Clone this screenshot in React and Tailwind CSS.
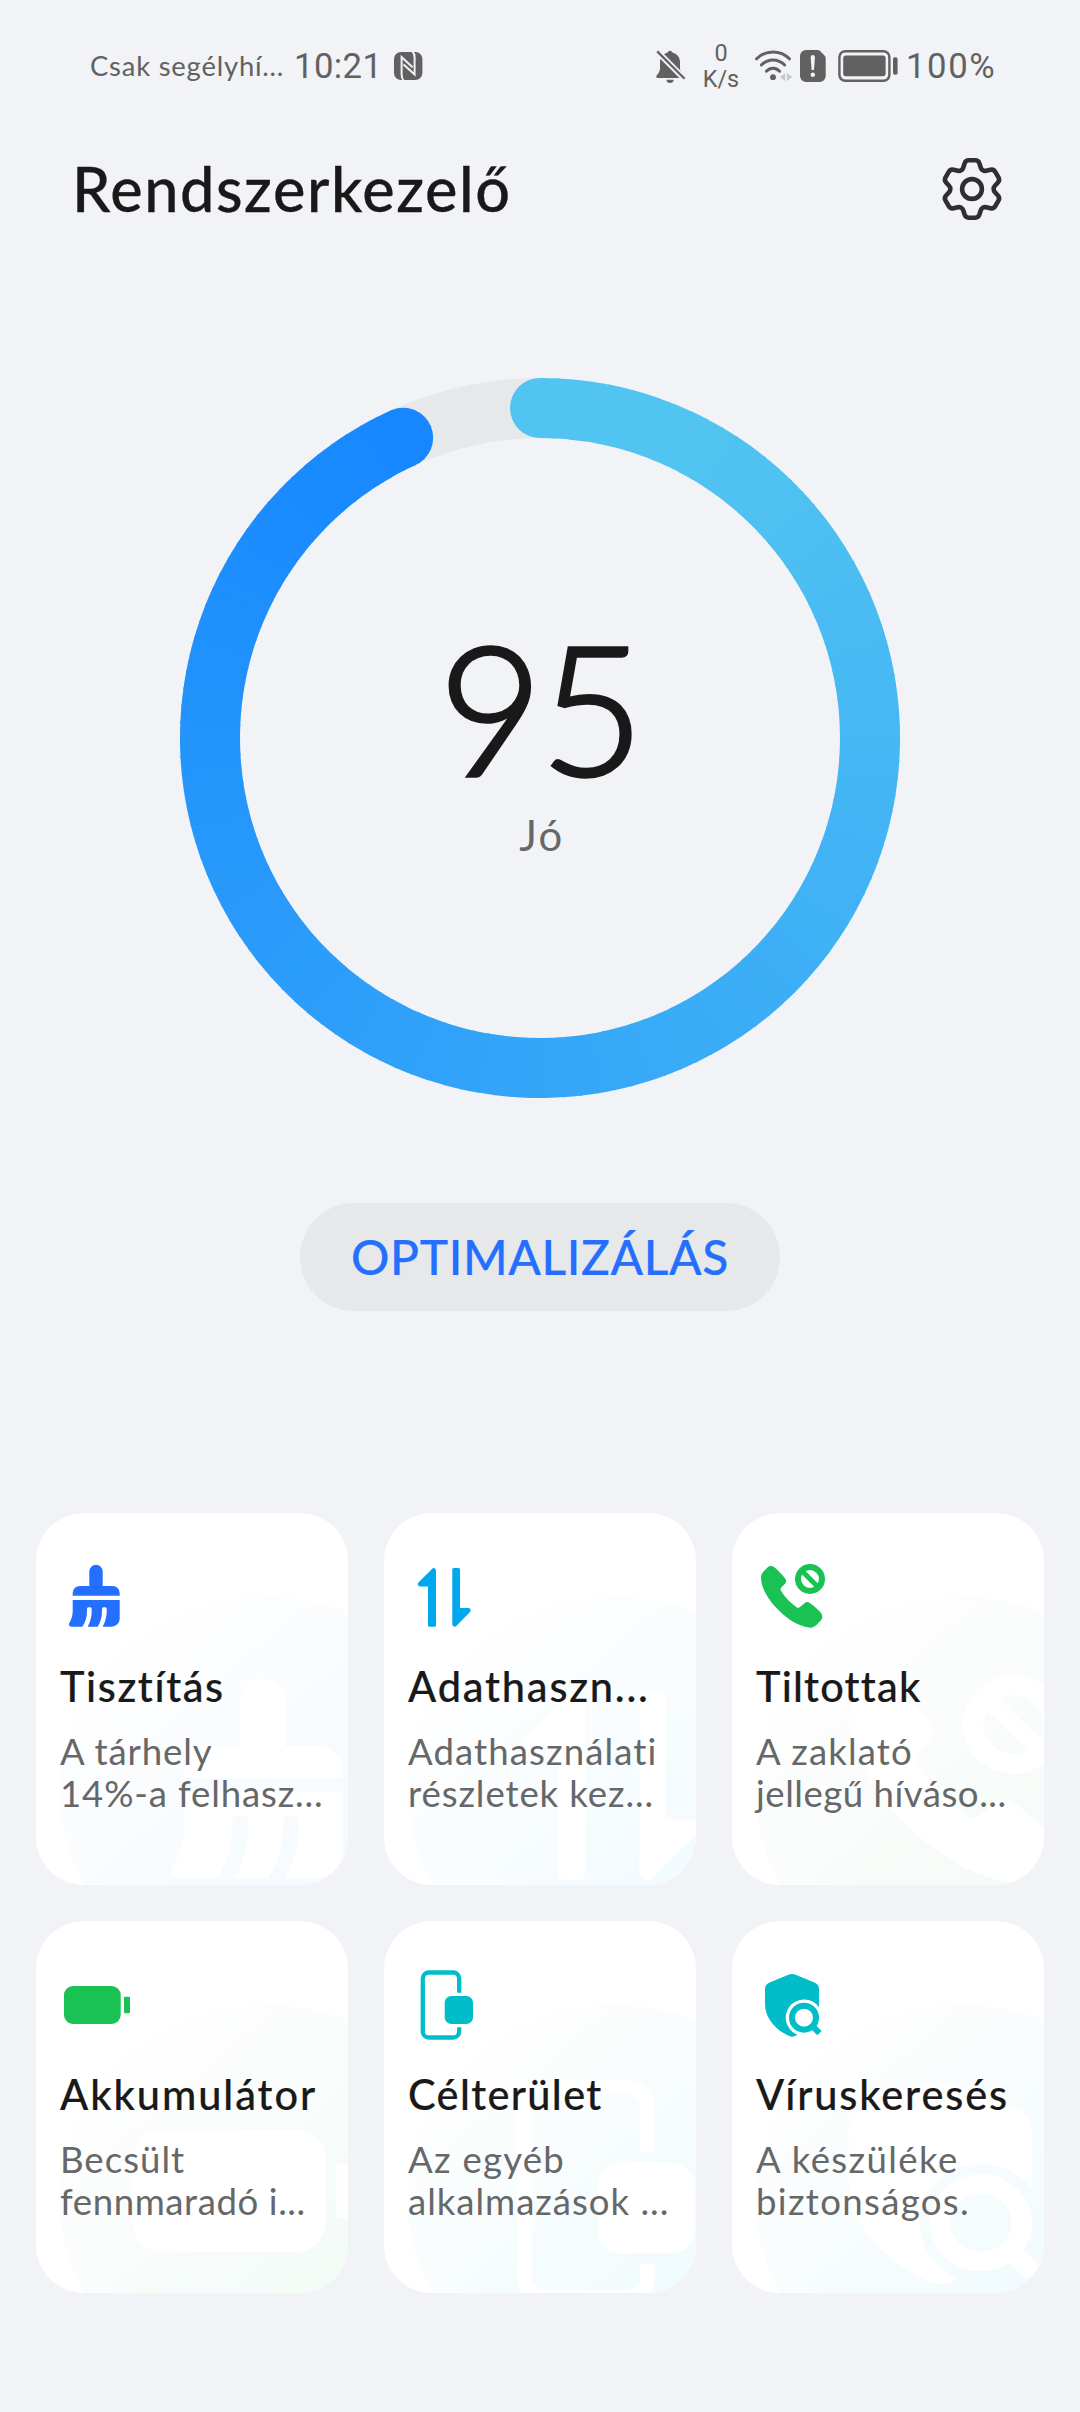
import clsx from "clsx";

const CX = 360;
const R = 330;
const SWEEP = 335.5;

function polar(deg, r = R) {
  const a = ((deg - 90) * Math.PI) / 180;
  return [CX + r * Math.cos(a), CX + r * Math.sin(a)];
}

function ringColor(deg) {
  const t = Math.min(1, Math.max(0, (deg - 25) / 310));
  const from = [82, 196, 241];
  const to = [22, 135, 255];
  return `rgb(${from.map((c, i) => Math.round(c + (to[i] - c) * t)).join(",")})`;
}

// Arc is cut into short slices, SVG has no conic gradient
const STEP = 2.75;
const slices = Array.from({ length: Math.round(SWEEP / STEP) }, (_, i) => {
  const a = i * STEP;
  const b = Math.min(SWEEP, a + STEP + 0.4);
  const [x1, y1] = polar(a);
  const [x2, y2] = polar(b);
  return { d: `M${x1} ${y1}A${R} ${R} 0 0 1 ${x2} ${y2}`, color: ringColor(a) };
});

function ScoreRing() {
  const [ex, ey] = polar(SWEEP);
  return (
    <svg viewBox="0 0 720 720" className="w-[720px] h-[720px] [grid-area:1/1]" fill="none">
      <circle cx={CX} cy={CX} r={R} stroke="#e6e8ea" strokeWidth="60" />
      <circle cx={CX} cy={CX - R} r="30" fill={ringColor(0)} />
      {slices.map((s) => (
        <path key={s.d} d={s.d} stroke={s.color} strokeWidth="60" />
      ))}
      <circle cx={ex} cy={ey} r="30" fill={ringColor(SWEEP)} />
    </svg>
  );
}

// Six-tooth gear outline with rounded corners
function gearPath() {
  const tooth = [[-9.3, -19.6, 2], [-6.4, -28.7, 3.2], [6.4, -28.7, 3.2], [9.3, -19.6, 2]];
  const pts = [];
  for (let k = 0; k < 6; k++) {
    const a = (k * Math.PI) / 3;
    tooth.forEach(([x, y, r]) =>
      pts.push([x * Math.cos(a) - y * Math.sin(a), x * Math.sin(a) + y * Math.cos(a), r])
    );
  }
  const toward = (p, q, d) => {
    const len = Math.hypot(q[0] - p[0], q[1] - p[1]);
    const t = Math.min(d / len, 0.5);
    return `${(p[0] + (q[0] - p[0]) * t).toFixed(2)} ${(p[1] + (q[1] - p[1]) * t).toFixed(2)}`;
  };
  return (
    pts
      .map((p, i) => {
        const prev = pts[(i + pts.length - 1) % pts.length];
        const next = pts[(i + 1) % pts.length];
        return `${i ? "L" : "M"}${toward(p, prev, p[2])}Q${p[0].toFixed(2)} ${p[1].toFixed(2)} ${toward(p, next, p[2])}`;
      })
      .join("") + "Z"
  );
}

function GearIcon() {
  return (
    <svg viewBox="-36 -36 72 72" className="w-[72px] h-[72px]" fill="none" stroke="#2f2f2f" strokeWidth="4.6" strokeLinejoin="round">
      <path d={gearPath()} />
      <circle r="9.9" />
    </svg>
  );
}

function NfcIcon() {
  return (
    <svg viewBox="0 0 28 28" className="w-7 h-7 overflow-visible" fill="none">
      <rect width="28.4" height="28" rx="7" fill="#616161" />
      <path d="M9.6 28.4C8 27 7.6 25 7.6 22.5V5L18.6 15.2" stroke="#f1f3f7" strokeWidth="2" />
      <path d="M18.4 -.4C20 1 20.6 3 20.6 5.5V22.5L9.6 12.4" stroke="#f1f3f7" strokeWidth="2" />
    </svg>
  );
}

function MutedBellIcon() {
  return (
    <svg viewBox="0 0 30 33" className="w-[30px] h-[33px]" fill="#616161">
      <path d="M11.5 2.4a2.8 2.8 0 0 1 5 0C21.5 3.8 24 7.5 24 12v6.5c0 2.5 1.5 4.5 3.5 6.5V28H.5v-2.5C2.5 23.5 4 21 4 18.5V12c0-4.5 2.8-8.2 7.5-9.6Z" />
      <path d="M10.6 29.8h7a3.5 3.2 0 0 1-7 0Z" />
      <path d="M-1 -.8 30 30.4" stroke="#f1f3f7" strokeWidth="6" />
      <path d="M1.2 1.4 28.6 28.8" stroke="#616161" strokeWidth="2.2" />
    </svg>
  );
}

function WifiIcon() {
  return (
    <svg viewBox="0 0 38 32" className="w-[38px] h-8" fill="none" stroke="#616161" strokeWidth="3" strokeLinecap="round">
      <path d="M1.6 8.8C10.5-.4 25.5-.4 34.4 8.8" />
      <path d="M6.4 15C13 8.2 23 8.2 29.6 15" />
      <path d="M11.4 21.2c3.8-4 9.4-4 13.2 0" />
      <circle cx="18" cy="27.2" r="2.9" fill="#616161" stroke="none" />
      <path d="M30.3 23v8L25 27ZM32 23v8l5.3-4Z" fill="#c6c8cc" stroke="none" />
    </svg>
  );
}

function SimAlertIcon() {
  return (
    <svg viewBox="0 0 26 32" className="w-[26px] h-8" fill="#616161">
      <path d="M6 0h11.500a4 4 0 0 1 2.800 1.200l4.200 4.300A4 4 0 0 1 25.700 8.300V26a6 6 0 0 1-6 6H6a6 6 0 0 1-6-6V6a6 6 0 0 1 6-6Z" />
      <path d="M10.700 7.200a2.100 2.100 0 0 1 4.200 0L14 20h-2.400Z" fill="#f1f3f7" />
      <circle cx="12.8" cy="24.7" r="2.2" fill="#f1f3f7" />
    </svg>
  );
}

function StatusBatteryIcon() {
  return (
    <svg viewBox="0 0 60 32" className="w-[60px] h-8" fill="#616161">
      <rect x="1.4" y="1.2" width="50" height="29.6" rx="6" fill="none" stroke="#616161" strokeWidth="2.4" />
      <rect x="5.2" y="5.6" width="42.4" height="20.6" rx="2.6" />
      <rect x="55" y="7.2" width="4.6" height="17.6" rx="1.8" />
    </svg>
  );
}

const shapes = {
  broom: (
    <>
      <path d="M29.3 25V10.4a6.7 6.7 0 0 1 13.4 0V25h10a7 7 0 0 1 7 7v2.7h-47V32a7 7 0 0 1 7-7Z" />
      <path d="M12.7 39h47v18.7a8 8 0 0 1-8 8h-9C45.7 60 46.7 55 46.7 50v-2.2a1.5 1.5 0 0 0-1.5-1.5h-1.7a1.5 1.5 0 0 0-1.5 1.5V50c0 6-1.5 11.5-4.3 15.7h-10C30.7 60 31.7 55 31.7 50v-2.2a1.5 1.5 0 0 0-1.5-1.5h-1.7a1.5 1.5 0 0 0-1.5 1.5V50c0 6-1.5 11.5-4.7 15.7H11.5a2.5 2.5 0 0 1-2.2-3.8C11.7 58 12.7 54 12.7 50Z" />
    </>
  ),
  arrows: (
    <>
      <path d="M20 64.2V25.5h-8a2.3 2.3 0 0 1-1.6-3.9L24 7.9a2.3 2.3 0 0 1 4 1.6v54.7a1.5 1.5 0 0 1-1.5 1.5h-5a1.5 1.5 0 0 1-1.5-1.5Z" />
      <path d="M52 8.5V47h8.4a2.3 2.3 0 0 1 1.6 3.9L48.3 65a2.3 2.3 0 0 1-4-1.6V8.5A1.5 1.5 0 0 1 45.8 7h4.7A1.5 1.5 0 0 1 52 8.5Z" />
    </>
  ),
  blocked: (
    <>
      <path d="M5 16.5C5 13.5 6.5 11.5 9 9l2-2c2.5-2.5 5.5-2.5 8-.2C23 10.5 27 14.5 29.5 18c1 1.8.8 3.3-.5 4.8l-3.7 3.7c-.9 1-.9 2.3-.1 3.5C29 36.5 34.5 42 40.5 46.3c1.2.8 2.5.7 3.5-.3l4.5-3.8c1.5-1.4 3.5-1.4 5.3-.2C58 44.8 62 48.5 65 52c1.8 2.3 1.8 5 0 7.2l-4 4.3c-2.2 2.5-5 3.5-8 3C43 65 32 59 22 48.5 11.5 38 5 26 5 16.5Z" />
      <circle cx="54" cy="18" r="12" fill="none" stroke="currentColor" strokeWidth="6" />
      <path d="m46 10 16 16" stroke="currentColor" strokeWidth="5" />
    </>
  ),
  battery: (
    <>
      <rect x="4" y="17" width="56.7" height="38" rx="9" />
      <rect x="64" y="27.7" width="6" height="16.6" rx="1" />
    </>
  ),
  dropzone: (
    <>
      <path d="M51.2 23.7V9.5a6 6 0 0 0-6-6H20.8a6 6 0 0 0-6 6v53a6 6 0 0 0 6 6h24.4a6 6 0 0 0 6-6v-4.2" fill="none" stroke="currentColor" strokeWidth="4.3" />
      <rect x="36.7" y="27" width="28.3" height="28" rx="6.5" />
    </>
  ),
  scan: (
    <>
      <path d="M33 5.5a8 8 0 0 1 6 0l19.5 8C61.5 14.8 63 17 63 20v18.2A18.3 18.3 0 1 0 41.5 65.8L39 67c-2 1-4 1-6 0C18 60 9 48 9 35V20c0-3 1.5-5.2 4.5-6.5Z" />
      <circle cx="48" cy="48.7" r="12" fill="none" stroke="currentColor" strokeWidth="6" />
      <path d="m57.5 58.2 6 6" stroke="currentColor" strokeWidth="6" />
    </>
  ),
};

const tiles = [
  {
    id: "clean", shape: "broom", color: "text-[#256fff]", tint: "#f4faff", mark: "translate(105.5 153) scale(3.365 3.23)",
    title: "Tisztítás", track: "tracking-[1.6px]",
    lines: [["A tárhely", "tracking-[0.85px]"], ["14%-a felhasz...", "tracking-[0.85px]"]],
  },
  {
    id: "data", shape: "arrows", color: "text-[#00a9ee]", tint: "#f3fbfe", mark: "translate(107 155) scale(3.35 3.22)",
    title: "Adathaszn...", track: "tracking-[1.8px]",
    lines: [["Adathasználati", "tracking-[1.1px]"], ["részletek kez...", "tracking-[0.9px]"]],
  },
  {
    id: "blocked", shape: "blocked", color: "text-[#19c252]", tint: "#f4fbf7", mark: "translate(100.4 153) scale(3.35 3.25)",
    title: "Tiltottak", track: "tracking-[1.2px]",
    lines: [["A zaklató", "tracking-[1.15px]"], ["jellegű híváso...", "tracking-[0.52px]"]],
  },
  {
    id: "battery", shape: "battery", color: "text-[#19c252]", tint: "#f3fbf7", mark: "translate(83 154) scale(3.4 3.22)",
    title: "Akkumulátor", track: "tracking-[1.95px]",
    lines: [["Becsült", "tracking-[1px]"], ["fennmaradó i...", "tracking-[0.58px]"]],
  },
  {
    id: "zone", shape: "dropzone", color: "text-[#00bdc9]", tint: "#f1fbfd", mark: "translate(90.5 155) scale(3.38 3.22)",
    title: "Célterület", track: "tracking-[1.35px]",
    lines: [["Az egyéb", "tracking-[1.24px]"], ["alkalmazások ...", "tracking-[0.98px]"]],
  },
  {
    id: "virus", shape: "scan", color: "text-[#00bdc9]", tint: "#f1fbfd", mark: "translate(86.4 144.5) scale(3.39 3.23)",
    title: "Víruskeresés", track: "tracking-[1.87px]",
    lines: [["A készüléke", "tracking-[1.4px]"], ["biztonságos.", "tracking-[1.34px]"]],
  },
];

function Tile({ tile }) {
  return (
    <button className="relative h-[372px] rounded-[48px] bg-white overflow-hidden px-6 pt-12 flex flex-col items-start text-left">
      {/* Faded watermark behind the text */}
      <svg viewBox="0 0 312 372" className="absolute inset-0 w-full h-full text-white" fill="currentColor">
        <defs>
          <linearGradient id={`tint-${tile.id}`} gradientUnits="userSpaceOnUse" x1="90" y1="140" x2="290" y2="372">
            <stop offset="0" stopColor="#fefefe" />
            <stop offset="1" stopColor={tile.tint} />
          </linearGradient>
        </defs>
        <ellipse cx="232" cy="280" rx="208" ry="196" fill={`url(#tint-${tile.id})`} />
        <g transform={tile.mark}>{shapes[tile.shape]}</g>
      </svg>

      <svg viewBox="0 0 72 72" className={clsx("relative w-[72px] h-[72px] shrink-0", tile.color)} fill="currentColor">
        {shapes[tile.shape]}
      </svg>
      <span className={clsx("relative mt-7 text-[41.5px] leading-[50px] font-medium [-webkit-text-stroke:0.2px_#191919] text-[#191919] whitespace-nowrap", tile.track)}>
        {tile.title}
      </span>
      <span className="relative mt-5 text-[36.6px] leading-[41.5px] text-[#666768] whitespace-nowrap">
        {tile.lines.map(([text, track]) => (
          <span key={text} className={clsx("block", track)}>{text}</span>
        ))}
      </span>
    </button>
  );
}

export default function App() {
  return (
    <div className="w-[1080px] h-[2412px] overflow-hidden bg-[#f1f3f7] font-['Lato','Liberation_Sans',sans-serif] flex flex-col">
      {/* Status bar */}
      <div className="h-[132px] pl-[90px] pr-[84px] flex items-center text-[#616161] whitespace-nowrap">
        <span className="w-[204px] text-[27.4px] tracking-[0.8px]">Csak segélyhí...</span>
        <span className="w-[100px] font-['Roboto'] text-[34.7px] tracking-[0.4px]">10:21</span>
        <NfcIcon />
        <div className="ml-auto flex items-center">
          <MutedBellIcon />
          <div className="ml-[15px] w-10 flex flex-col items-center font-['Roboto'] text-[23.4px] leading-[26.5px]">
            <span>0</span>
            <span>K/s</span>
          </div>
          <div className="ml-[14px]"><WifiIcon /></div>
          <div className="ml-[7px]"><SimAlertIcon /></div>
          <div className="ml-3"><StatusBatteryIcon /></div>
          <span className="ml-2 w-[90px] font-['Roboto'] text-[34.7px] tracking-[1.6px]">100%</span>
        </div>
      </div>

      {/* Header */}
      <div className="h-28 pt-0.5 pl-[72px] pr-[72px] flex items-center justify-between">
        <h1 className="text-[61.2px] leading-none font-medium [-webkit-text-stroke:0.3px_#191919] tracking-[1.59px] text-[#191919]">Rendszerkezelő</h1>
        <button><GearIcon /></button>
      </div>

      {/* Score */}
      <div className="mt-[134px] grid justify-center">
        <ScoreRing />
        <div className="[grid-area:1/1] pt-[238px] flex flex-col items-center">
          <span className="h-[182px] text-[180px] leading-[180px] font-light [-webkit-text-stroke:3.5px_#191919] tracking-[-3px] text-[#191919]">95</span>
          <span className="mt-[13px] pl-1 text-[41.8px] leading-[48px] tracking-[2.5px] text-[#666768]">Jó</span>
        </div>
      </div>

      <button className="mt-[105px] w-[480px] h-[108px] pb-px self-center rounded-full bg-[#e6e8ea] text-[47.9px] leading-none font-medium [-webkit-text-stroke:0.2px_#256fff] tracking-[0.62px] text-[#256fff]">
        OPTIMALIZÁLÁS
      </button>

      <div className="mt-[202px] px-9 grid grid-cols-3 gap-9">
        {tiles.map((tile) => (
          <Tile key={tile.id} tile={tile} />
        ))}
      </div>
    </div>
  );
}
